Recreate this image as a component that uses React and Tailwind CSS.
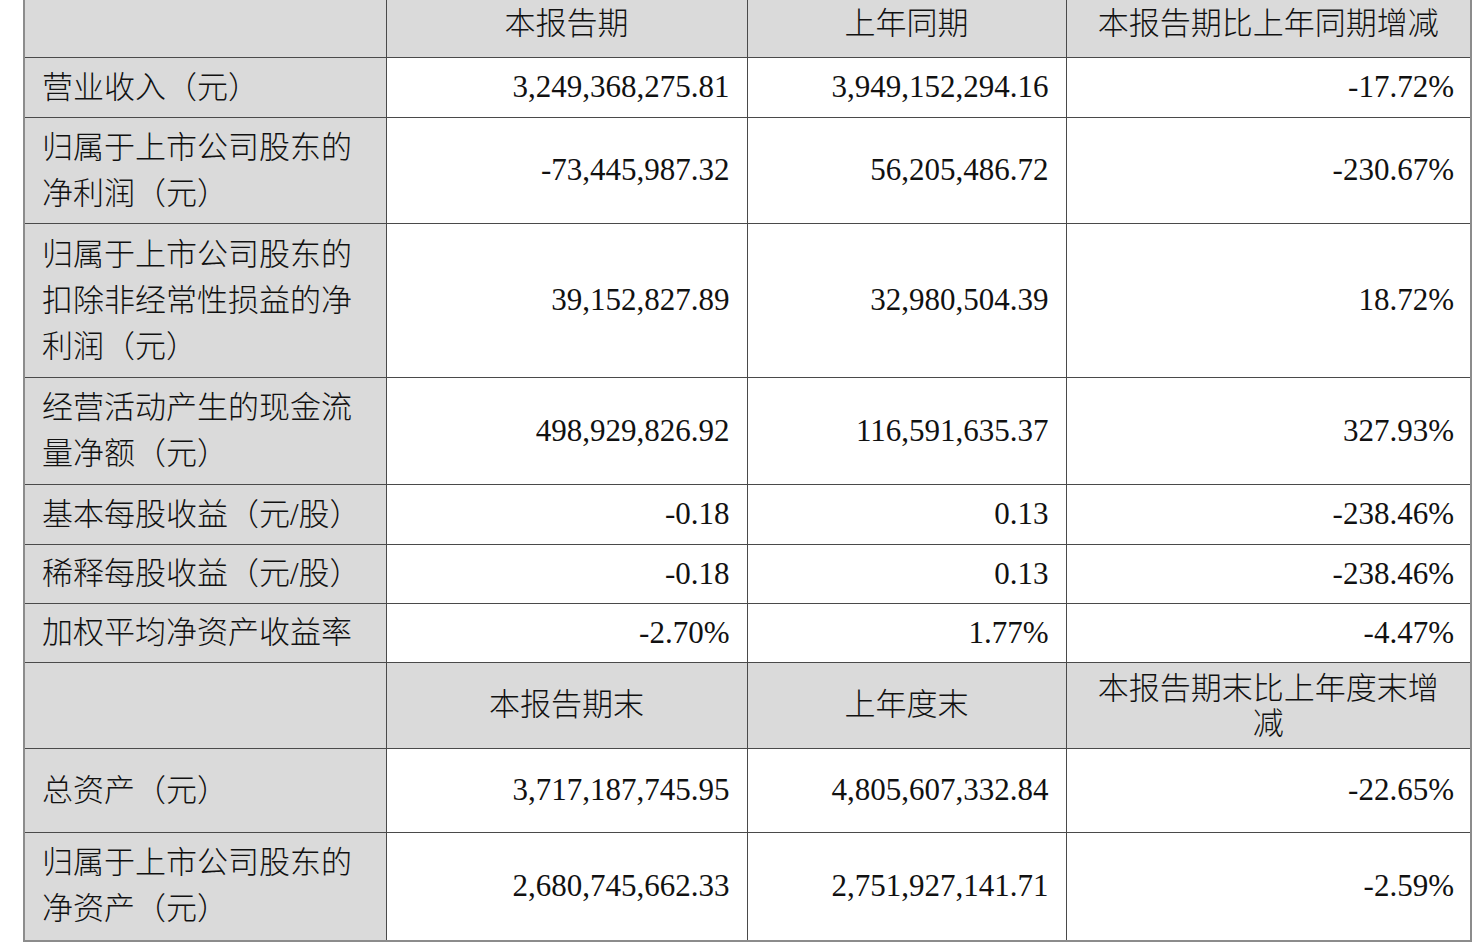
import React from 'react';

const rows = [
  { h: 'h-[60px]', label: ['营业收入（元）'], a: '3,249,368,275.81', b: '3,949,152,294.16', c: '-17.72%' },
  { h: 'h-[106px]', label: ['归属于上市公司股东的', '净利润（元）'], a: '-73,445,987.32', b: '56,205,486.72', c: '-230.67%' },
  { h: 'h-[154px]', label: ['归属于上市公司股东的', '扣除非经常性损益的净', '利润（元）'], a: '39,152,827.89', b: '32,980,504.39', c: '18.72%' },
  { h: 'h-[107px]', label: ['经营活动产生的现金流', '量净额（元）'], a: '498,929,826.92', b: '116,591,635.37', c: '327.93%' },
  { h: 'h-[60px]', label: ['基本每股收益（元/股）'], a: '-0.18', b: '0.13', c: '-238.46%' },
  { h: 'h-[59px]', label: ['稀释每股收益（元/股）'], a: '-0.18', b: '0.13', c: '-238.46%' },
  { h: 'h-[59px]', label: ['加权平均净资产收益率'], a: '-2.70%', b: '1.77%', c: '-4.47%' },
];

const rows2 = [
  { h: 'h-[84px]', label: ['总资产（元）'], a: '3,717,187,745.95', b: '4,805,607,332.84', c: '-22.65%' },
  { h: 'h-[108px]', label: ['归属于上市公司股东的', '净资产（元）'], a: '2,680,745,662.33', b: '2,751,927,141.71', c: '-2.59%' },
];

const cell = 'border border-[#4a4a4a] align-middle';

const DataRow = ({ r }) => (
  <tr className={r.h}>
    <td className={`${cell} border-l-2 border-l-[#8c8c8c] bg-[#dadada] pl-[17px] text-left leading-[46px]`}>
      {r.label.map((l, i) => (
        <div key={i}>{l}</div>
      ))}
    </td>
    <td className={`${cell} pr-[17px] text-right`}>{r.a}</td>
    <td className={`${cell} pr-[17px] text-right`}>{r.b}</td>
    <td className={`${cell} border-r-2 border-r-[#8c8c8c] pr-[16px] text-right`}>{r.c}</td>
  </tr>
);

export default function App() {
  return (
    <div className="h-[950px] w-[1480px] overflow-hidden bg-white">
      <table
        className="ml-[23px] -mt-[6px] w-[1447px] table-fixed border-collapse text-[31px] font-light text-[#111]"
        style={{ fontFamily: '"Liberation Serif", "Noto Sans CJK SC", serif' }}
      >
        <colgroup>
          <col className="w-[362px]" />
          <col className="w-[361px]" />
          <col className="w-[319px]" />
          <col className="w-[405px]" />
        </colgroup>
        <tbody>
          <tr className="h-[63px] bg-[#dadada]">
            <td className={`${cell} border-l-2 border-l-[#8c8c8c]`}></td>
            <td className={`${cell} pb-[4px] text-center`}>本报告期</td>
            <td className={`${cell} pb-[4px] text-center`}>上年同期</td>
            <td className={`${cell} border-r-2 border-r-[#8c8c8c] pb-[4px] text-center`}>本报告期比上年同期增减</td>
          </tr>
          {rows.map((r, i) => (
            <DataRow key={i} r={r} />
          ))}
          <tr className="h-[86px] bg-[#dadada]">
            <td className={`${cell} border-l-2 border-l-[#8c8c8c]`}></td>
            <td className={`${cell} text-center`}>本报告期末</td>
            <td className={`${cell} text-center`}>上年度末</td>
            <td className={`${cell} border-r-2 border-r-[#8c8c8c] text-center leading-[35px]`}>
              本报告期末比上年度末增
              <br />
              减
            </td>
          </tr>
          {rows2.map((r, i) => (
            <DataRow key={i} r={r} />
          ))}
          <tr className="h-0">
            <td colSpan={4} className="border-t-2 border-t-[#8c8c8c] p-0"></td>
          </tr>
        </tbody>
      </table>
    </div>
  );
}
